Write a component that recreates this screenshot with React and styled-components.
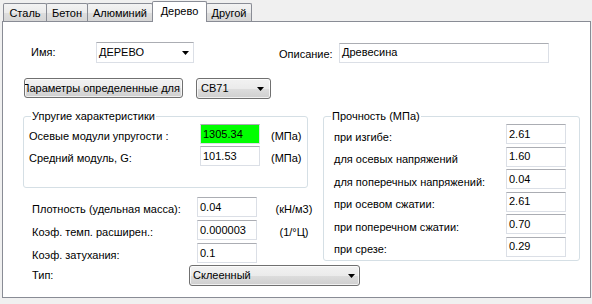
import React from 'react';
import styled, { createGlobalStyle } from 'styled-components';

const Global = createGlobalStyle`
  html, body { margin: 0; padding: 0; background: #f0f0f0; }
  body {
    font-family: "Liberation Sans", Arial, sans-serif;
    font-size: 11px;
    color: #000;
  }
  * { box-sizing: border-box; }
`;

const Window = styled.div`
  width: 592px;
  height: 304px;
  background: #f0f0f0;
  overflow: hidden;
`;

const TabStrip = styled.div`
  display: flex;
  align-items: flex-end;
  height: 21px;
  padding-left: 3px;
`;

const Tab = styled.div`
  position: relative;
  z-index: ${p => (p.$active ? 1 : 0)};
  flex: none;
  width: ${p => p.$w}px;
  height: ${p => (p.$active ? 21 : 18)}px;
  margin-left: ${p => (p.$first ? 0 : -1)}px;
  margin-bottom: ${p => (p.$active ? -1 : 0)}px;
  border: 1px solid #898c95;
  border-bottom: none;
  border-radius: 2px 2px 0 0;
  background: ${p =>
    p.$active
      ? '#ffffff'
      : 'linear-gradient(#f3f3f3 0%, #ebebeb 50%, #dedede 51%, #d6d6d6 100%)'};
  display: flex;
  justify-content: center;
  padding-top: 2px;
  line-height: 14px;
  white-space: nowrap;
`;

const Panel = styled.div`
  margin-left: 2px;
  width: 589px;
  height: 277px;
  border: 1px solid #898c95;
  background: #ffffff;
  padding: 20px 0 0 20px;
  display: flex;
  flex-direction: column;
`;

const TopRow = styled.div`
  display: flex;
  align-items: center;
  height: 21px;
  padding-left: 8px;
`;

const Label = styled.span`
  flex: none;
  width: ${p => p.$w}px;
  margin-left: ${p => p.$ml || 0}px;
  padding-top: ${p => p.$shift || 0}px;
  line-height: 13px;
  white-space: nowrap;
`;

const ComboEdit = styled.div`
  flex: none;
  width: ${p => p.$w}px;
  height: 21px;
  border: 1px solid #dbdfe6;
  border-top-color: #abadb3;
  background: #fff;
  display: flex;
  align-items: center;
  justify-content: space-between;
  padding: 0 4px 0 2px;
  line-height: 13px;
`;

const TextBox = styled.div`
  flex: none;
  width: ${p => p.$w || 60}px;
  height: 20px;
  border: 1px solid #dbdfe6;
  border-top-color: #abadb3;
  background: ${p => p.$bg || '#fff'};
  display: flex;
  align-items: center;
  padding: 0 2px;
  line-height: 13px;
  white-space: nowrap;
  overflow: hidden;
`;

const ButtonRow = styled.div`
  display: flex;
  align-items: flex-start;
  margin-top: 15px;
  padding-left: 1px;
`;

const ActionButton = styled.div`
  flex: none;
  width: 159px;
  height: 20px;
  border: 1px solid #707070;
  border-radius: 3px;
  background: linear-gradient(#f2f2f2 0%, #ebebeb 50%, #dddddd 51%, #cfcfcf 100%);
  box-shadow: inset 0 0 0 1px rgba(255, 255, 255, 0.7);
  display: flex;
  align-items: center;
  justify-content: flex-end;
  overflow: hidden;
  white-space: nowrap;
  padding-right: 2px;
  line-height: 13px;
`;

const DropButton = styled.div`
  flex: none;
  width: ${p => p.$w}px;
  height: 21px;
  margin-left: ${p => p.$ml || 0}px;
  border: 1px solid #707070;
  border-radius: 3px;
  background: linear-gradient(#f2f2f2 0%, #ebebeb 50%, #dddddd 51%, #cfcfcf 100%);
  box-shadow: inset 0 0 0 1px rgba(255, 255, 255, 0.7);
  display: flex;
  align-items: center;
  justify-content: space-between;
  padding: 0 ${p => p.$pr}px 0 ${p => p.$pl}px;
  line-height: 13px;
  white-space: nowrap;
`;

const Columns = styled.div`
  display: flex;
  align-items: flex-start;
  gap: 15px;
  margin-top: 17px;
`;

const LeftCol = styled.div`
  flex: none;
  width: 285px;
  display: flex;
  flex-direction: column;
`;

const Group = styled.div`
  flex: none;
  width: ${p => p.$w}px;
  height: ${p => p.$h}px;
  border: 1px solid #d5dfe5;
  border-radius: 3px;
  display: flex;
  flex-direction: column;
`;

const Legend = styled.div`
  align-self: flex-start;
  height: 13px;
  margin: -7px 0 0 7px;
  padding: 0 1px;
  background: #fff;
  line-height: 13px;
  white-space: nowrap;
`;

const FieldGrid = styled.div`
  display: grid;
  grid-template-columns: ${p => p.$cols};
  grid-auto-rows: 20px;
  row-gap: ${p => p.$rgap}px;
  column-gap: ${p => p.$cgap}px;
  margin: ${p => p.$m};
`;

const GridLabel = styled.span`
  align-self: center;
  padding-top: ${p => p.$shift || 0}px;
  line-height: 13px;
  white-space: nowrap;
  text-align: ${p => p.$align || 'left'};
`;

const TypeRow = styled.div`
  display: flex;
  align-items: center;
  margin-top: 2px;
  padding-left: 9px;
`;

const Arrow = () => (
  <svg width="7" height="4" viewBox="0 0 7 4" style={{ flex: 'none' }}>
    <polygon points="0,0 7,0 3.5,4" fill="#000" />
  </svg>
);

const tabs = [
  { t: 'Сталь', w: 44 },
  { t: 'Бетон', w: 42 },
  { t: 'Алюминий', w: 66 },
  { t: 'Дерево', w: 55, active: true },
  { t: 'Другой', w: 46 },
];

const elastic = [
  { l: 'Осевые модули упругости :', v: '1305.34', bg: '#00ff00' },
  { l: 'Средний модуль, G:', v: '101.53' },
];

const strength = [
  { l: 'при изгибе:', v: '2.61' },
  { l: 'для осевых напряжений', v: '1.60' },
  { l: 'для поперечных напряжений:', v: '0.04' },
  { l: 'при осевом сжатии:', v: '2.61' },
  { l: 'при поперечном сжатии:', v: '0.70' },
  { l: 'при срезе:', v: '0.29' },
];

const misc = [
  { l: 'Плотность (удельная масса):', v: '0.04', u: '(кН/м3)' },
  { l: 'Коэф. темп. расширен.:', v: '0.000003', u: '(1/°Ц)' },
  { l: 'Коэф. затухания:', v: '0.1', u: '' },
];

export default function App() {
  return (
    <Window>
      <Global />
      <TabStrip>
        {tabs.map((tab, i) => (
          <Tab key={tab.t} $w={tab.w} $first={i === 0} $active={tab.active}>
            {tab.t}
          </Tab>
        ))}
      </TabStrip>
      <Panel>
        <TopRow>
          <Label $w={65}>Имя:</Label>
          <ComboEdit $w={98}>
            <span>ДЕРЕВО</span>
            <Arrow />
          </ComboEdit>
          <Label $w={60} $ml={85} $shift={4}>Описание:</Label>
          <TextBox $w={210}>Древесина</TextBox>
        </TopRow>

        <ButtonRow>
          <ActionButton>Параметры определенные для</ActionButton>
          <DropButton $w={75} $ml={13} $pl={4} $pr={6}>
            <span>CB71</span>
            <Arrow />
          </DropButton>
        </ButtonRow>

        <Columns>
          <LeftCol>
            <Group $w={285} $h={72}>
              <Legend>Упругие характеристики</Legend>
              <FieldGrid $cols="160px 60px auto" $rgap={2} $cgap={11} $m="1px 0 0 5px">
                {elastic.map(r => (
                  <React.Fragment key={r.l}>
                    <GridLabel $shift={5}>{r.l}</GridLabel>
                    <TextBox $bg={r.bg}>{r.v}</TextBox>
                    <GridLabel $shift={5}>(МПа)</GridLabel>
                  </React.Fragment>
                ))}
              </FieldGrid>
            </Group>

            <FieldGrid $cols="157px 60px 58px" $rgap={3} $cgap={8} $m="9px 0 0 9px">
              {misc.map(r => (
                <React.Fragment key={r.l}>
                  <GridLabel $shift={5}>{r.l}</GridLabel>
                  <TextBox>{r.v}</TextBox>
                  <GridLabel $shift={5} $align="center">{r.u}</GridLabel>
                </React.Fragment>
              ))}
            </FieldGrid>

            <TypeRow>
              <Label $w={157}>Тип:</Label>
              <DropButton $w={171} $pl={3} $pr={4}>
                <span>Склеенный</span>
                <Arrow />
              </DropButton>
            </TypeRow>
          </LeftCol>

          <Group $w={257} $h={145}>
            <Legend>Прочность (МПа)</Legend>
            <FieldGrid $cols="172px 60px" $rgap={2.6} $cgap={0} $m="1px 0 0 10px">
              {strength.map(r => (
                <React.Fragment key={r.l}>
                  <GridLabel $shift={6}>{r.l}</GridLabel>
                  <TextBox>{r.v}</TextBox>
                </React.Fragment>
              ))}
            </FieldGrid>
          </Group>
        </Columns>
      </Panel>
    </Window>
  );
}
